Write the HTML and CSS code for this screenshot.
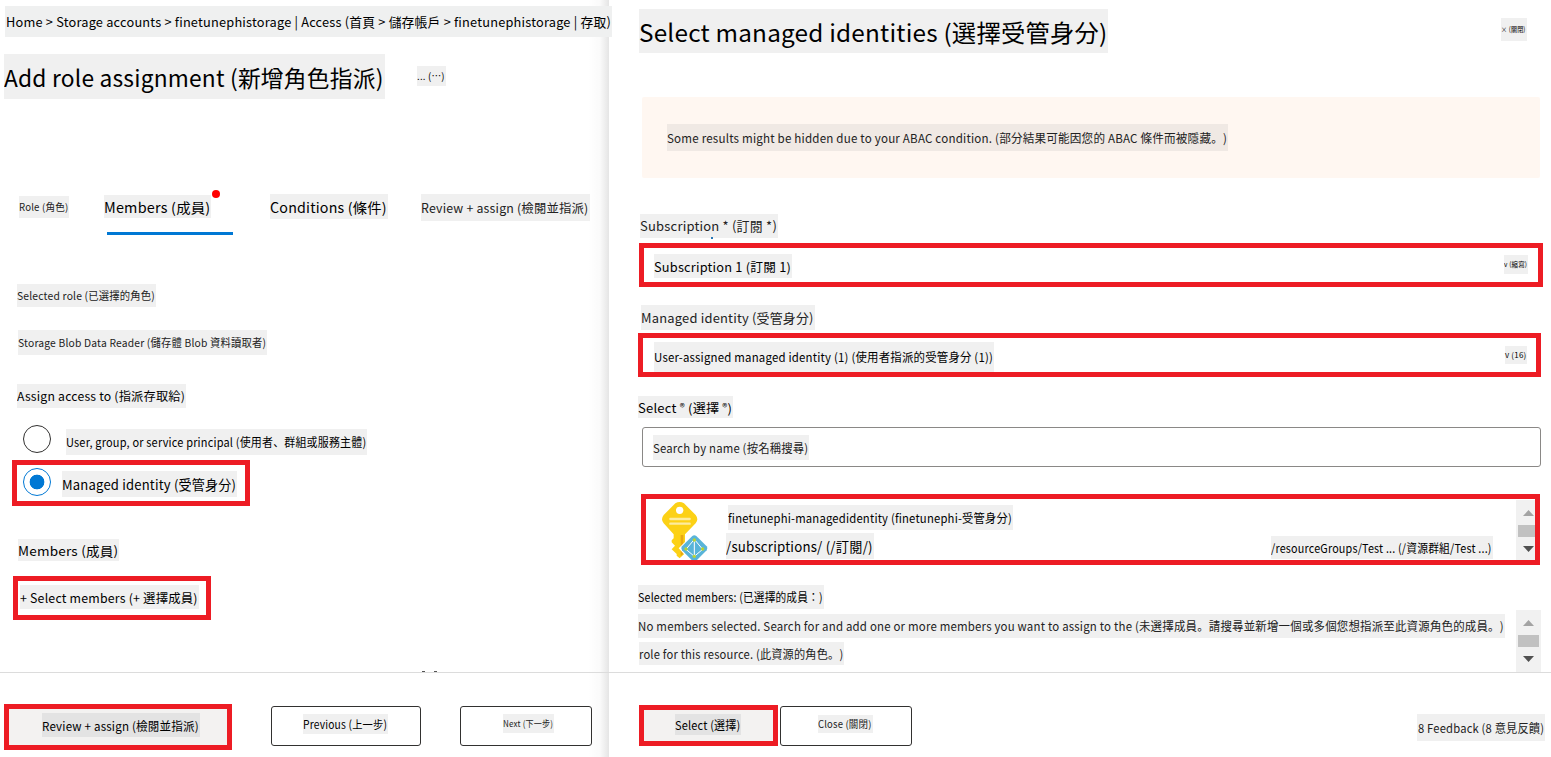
FILE: index.html
```
<!DOCTYPE html>
<html lang="ja">
<head>
<meta charset="utf-8">
<title>Add role assignment</title>
<link rel="stylesheet" href="styles.css">
</head>
<body>
<div class="app">
  <section class="panel assignment">
    <div class="content">
      <nav class="tag breadcrumb"><span>Home &gt; Storage accounts &gt; finetunephistorage | Access (首頁 &gt; 儲存帳戶 &gt; finetunephistorage | 存取)</span></nav>
      <header class="heading">
        <h1 class="tag title"><span>Add role assignment (新增角色指派)</span></h1>
        <div class="tag more"><span>... (⋯)</span></div>
      </header>
      <div class="tabs">
        <div class="tag tab-role"><span>Role (角色)</span></div>
        <div class="tab-active"><div class="tag tab-members"><span>Members (成員)</span></div><i class="dot"></i></div>
        <div class="tag tab-conditions"><span>Conditions (條件)</span></div>
        <div class="tag tab-review"><span>Review + assign (檢閱並指派)</span></div>
      </div>
      <div class="tag selected-role"><span>Selected role (已選擇的角色)</span></div>
      <div class="tag role-name"><span>Storage Blob Data Reader (儲存體 Blob 資料讀取者)</span></div>
      <div class="tag assign-to"><span>Assign access to (指派存取給)</span></div>
      <div class="option"><i class="radio"></i><div class="tag option-user"><span>User, group, or service principal (使用者、群組或服務主體)</span></div></div>
      <div class="option marked option-box"><i class="radio on"></i><div class="tag option-managed"><span>Managed identity (受管身分)</span></div></div>
      <div class="tag members-label"><span>Members (成員)</span></div>
      <div class="marked select-members"><div class="tag select-members-text"><span>+ Select members (+ 選擇成員)</span></div></div>
      <div class="remnant"><i></i><i></i></div>
    </div>
    <footer class="footer">
      <div class="button marked review-button"><div class="tag"><span>Review + assign (檢閱並指派)</span></div></div>
      <div class="button previous"><div class="tag"><span>Previous (上一步)</span></div></div>
      <div class="button next"><div class="tag"><span>Next (下一步)</span></div></div>
    </footer>
  </section>

  <section class="panel identities">
    <div class="content">
      <header class="side-heading">
        <h2 class="tag side-title"><span>Select managed identities (選擇受管身分)</span></h2>
        <div class="tag close-x"><span>× (關閉)</span></div>
      </header>
      <div class="notice"><div class="tag notice-text"><span>Some results might be hidden due to your ABAC condition. (部分結果可能因您的 ABAC 條件而被隱藏。)</span></div></div>
      <div class="tag subscription-label"><span>Subscription * (訂閱 *)</span><i class="speck"></i></div>
      <div class="field marked subscription-field"><div class="tag subscription-value"><span>Subscription 1 (訂閱 1)</span></div><div class="tag chevron-a"><span>v (縮寫)</span></div></div>
      <div class="tag identity-label"><span>Managed identity (受管身分)</span></div>
      <div class="field marked identity-field"><div class="tag identity-value"><span>User-assigned managed identity (1) (使用者指派的受管身分 (1))</span></div><div class="tag chevron-b"><span>v (16)</span></div></div>
      <div class="tag select-label"><span>Select <sup>®</sup> (選擇 <sup>®</sup>)</span></div>
      <div class="search"><div class="tag search-text"><span>Search by name (按名稱搜尋)</span></div></div>
      <div class="results marked">
        <svg class="key" viewBox="90 60 150 180">
          <path fill="#fcd116" d="M136 70Q149 62 162 70L197 105Q207 118 197 130L165 163V220L149 235L140 227V222L125 208L135 197L125 187V181L131 175V163L101 130Q91 118 101 105Z"/>
          <path fill="#e8a812" d="M152 165H160V221L152 229Z"/>
          <circle cx="149" cy="91" r="11" fill="#fff"/>
          <path stroke="#fdec9f" stroke-width="7" stroke-linecap="round" d="M121 117H179M121 131H179"/>
          <path fill="#fff" d="M193 158L240 205V240H178L146 205Z"/>
          <path fill="#59b4d9" d="M187 168Q193 163 199 168L230 199Q235 205 230 211L201 240H185L156 211Q151 205 156 199Z"/>
          <path fill="none" stroke="#fff" stroke-width="3" d="M193 178L168 208L193 229L218 208ZM193 178V229"/>
          <g fill="#b8d432"><circle cx="193" cy="180" r="5"/><circle cx="168" cy="207" r="5"/><circle cx="218" cy="207" r="5"/><circle cx="193" cy="229" r="5"/></g>
        </svg>
        <div class="result">
          <div class="tag result-name"><span>finetunephi-managedidentity (finetunephi-受管身分)</span></div>
          <div class="result-path">
            <div class="tag result-sub"><span>/subscriptions/ (/訂閱/)</span></div>
            <div class="tag result-group"><span>/resourceGroups/Test ... (/資源群組/Test ...)</span></div>
          </div>
        </div>
        <div class="scrollbar"><i class="up"></i><i class="thumb"></i><i class="down"></i></div>
      </div>
      <div class="tag selected-label"><span>Selected members: (已選擇的成員：)</span></div>
      <div class="selected">
        <div class="selected-text">
          <div class="tag none-text"><span>No members selected. Search for and add one or more members you want to assign to the (未選擇成員。請搜尋並新增一個或多個您想指派至此資源角色的成員。)</span></div>
          <div class="tag resource-text"><span>role for this resource. (此資源的角色。)</span></div>
        </div>
        <div class="scrollbar"><i class="up"></i><i class="thumb"></i><i class="down"></i></div>
      </div>
    </div>
    <footer class="footer">
      <div class="button marked select-button"><div class="tag"><span>Select (選擇)</span></div></div>
      <div class="button close-button"><div class="tag"><span>Close (關閉)</span></div></div>
      <div class="tag feedback"><span>8 Feedback (8 意見反饋)</span></div>
    </footer>
  </section>
</div>
<script src="fit.js"></script>
</body>
</html>
```
FILE: styles.css
```
* { box-sizing: border-box; }
body { margin: 0; background: #fff; color: #000; font-family: "Noto Sans CJK JP", "Noto Sans CJK TC", "Noto Sans", sans-serif; overflow: hidden; text-spacing-trim: space-all; }
h1, h2 { margin: 0; font-weight: 400; }
.app { display: flex; width: 1551px; height: 757px; }
.panel { display: flex; flex-direction: column; height: 757px; }
.assignment { width: 609px; background: linear-gradient(to right, transparent 588px, rgba(0,0,0,.02) 600px, rgba(0,0,0,.1) 609px); position: relative; z-index: 1; }
.identities { width: 942px; }
.content { height: 672px; display: flex; flex-direction: column; align-items: flex-start; }
.footer { flex: 1; border-top: 1px solid #dcdcdc; display: flex; align-items: flex-start; }

/* Labels: the text is fitted to the width of its plate */
.tag { flex: none; background: #f0f0f0; white-space: nowrap; }
.tag span { display: inline-block; transform-origin: 0 50%; letter-spacing: .2px; }
.marked { border: 5px solid #ed1c24; }

.breadcrumb { margin: 6px 0 0 5px; width: 607px; height: 31px; line-height: 32px; font-size: 13px; background: #eff0f0; padding-left: 1px; }
.heading { display: flex; margin: 17px 0 0 4px; }
.title { width: 381px; height: 45px; line-height: 46px; font-size: 23px; }
.more { margin: 12px 0 0 32px; width: 29px; height: 20px; line-height: 20px; font-size: 10px; }
.tabs { display: flex; margin: 95px 0 0 19px; height: 41px; }
.tab-role { margin-top: 2px; width: 50px; height: 22px; line-height: 22px; font-size: 10px; color: #222; }
.tab-active { margin-left: 35px; width: 129px; height: 41px; position: relative; }
.tab-active::after { content: ""; display: block; margin: 14px 0 0 3px; height: 3px; background: #0078d4; }
.tab-members { margin-top: 1px; width: 107px; height: 23px; line-height: 24px; font-size: 14px; }
.dot { position: absolute; left: 108px; top: -4px; width: 8px; height: 8px; border-radius: 50%; background: #f00; }
.tab-conditions { margin-left: 37px; width: 118px; height: 25px; line-height: 26px; font-size: 14px; }
.tab-review { margin-left: 33px; width: 169px; height: 27px; line-height: 28px; font-size: 12.5px; color: #222; }
.selected-role { margin: 49px 0 0 17px; width: 139px; height: 23px; line-height: 23px; font-size: 11px; color: #222; }
.role-name { margin: 23px 0 0 18px; width: 249px; height: 25px; line-height: 25px; font-size: 11px; color: #222; }
.assign-to { margin: 29px 0 0 17px; width: 169px; height: 24px; line-height: 24px; font-size: 12px; }
.option { display: flex; }
.option:not(.option-box) { margin: 17px 0 0 23px; }
.radio { flex: none; width: 28px; height: 28px; border: 1px solid #323130; border-radius: 50%; background: #fff; }
.radio.on { border-color: #0078d4; background: radial-gradient(circle, #0078d4 7px, #fff 7.7px); }
.option-user { margin: 4px 0 0 15px; width: 301px; height: 26px; line-height: 26px; font-size: 12px; }
.option-box { margin: 5px 0 0 12px; width: 238px; height: 46px; padding: 3px 0 0 6px; }
.option-managed { margin: 3px 0 0 11px; width: 175px; height: 26px; line-height: 26px; font-size: 13.5px; }
.members-label { margin: 33px 0 0 18px; width: 101px; height: 22px; line-height: 24px; font-size: 13px; }
.select-members { margin: 15px 0 0 13px; width: 198px; height: 44px; padding: 4px 0 0 2px; }
.select-members-text { width: 179px; height: 24px; line-height: 26px; font-size: 12.5px; }
.remnant { display: flex; gap: 9px; margin: auto 0 0 422px; }
.remnant i { width: 3px; height: 1px; background: #555; }

.button { display: flex; flex: none; height: 40px; border: 1px solid #323130; border-radius: 3px; margin-top: 33px; background: #fff; }
.button.marked { border: 5px solid #ed1c24; border-radius: 0; background: #f3f2f1; }
.button.marked .tag { background: #e3e3e3; }
.review-button { margin: 31px 0 0 4px; width: 228px; height: 46px; padding: 4px 0 0 33px; }
.review-button .tag { width: 158px; height: 24px; line-height: 25px; font-size: 12px; }
.previous { margin-left: 39px; width: 150px; padding: 7px 0 0 31px; }
.previous .tag { width: 85px; height: 20px; line-height: 20px; font-size: 11.5px; }
.next { margin-left: 39px; width: 132px; padding: 7px 0 0 42px; }
.next .tag { width: 51px; height: 19px; line-height: 19px; font-size: 9px; color: #222; }

.side-heading { display: flex; margin: 9px 0 0 30px; height: 44px; }
.side-title { width: 469px; height: 44px; line-height: 46px; font-size: 24px; }
.close-x { margin: 9px 0 0 393px; width: 26px; height: 23px; line-height: 23px; font-size: 7px; }
.notice { margin: 44px 0 0 33px; width: 898px; height: 81px; border-radius: 2px; background: #fff7f1; padding: 27px 0 0 25px; }
.notice-text { width: 561px; height: 27px; line-height: 28px; font-size: 12px; background: #f0e9e4; color: #222; }
.subscription-label { margin: 36px 0 0 31px; width: 138px; height: 24px; line-height: 24px; font-size: 13px; position: relative; color: #222; }
.speck { position: absolute; left: 71px; top: 23px; width: 2px; height: 2px; background: #2878b8; }
.field { display: flex; justify-content: space-between; height: 44px; }
.subscription-field { margin: 5px 0 0 30px; width: 904px; padding: 6px 10px 0; }
.subscription-value { width: 138px; height: 24px; line-height: 25px; font-size: 12.5px; }
.chevron-a { margin-top: 1px; width: 24px; height: 19px; line-height: 19px; font-size: 7px; }
.identity-label { margin: 18px 0 0 32px; width: 174px; height: 25px; line-height: 25px; font-size: 13px; color: #222; }
.identity-field { margin: 3px 0 0 29px; width: 903px; padding: 4px 9px 0 11px; }
.identity-value { width: 340px; height: 30px; line-height: 30px; font-size: 12px; }
.chevron-b { margin-top: 4px; width: 22px; height: 18px; line-height: 18px; font-size: 8px; }
.select-label { margin: 19px 0 0 29px; width: 95px; height: 22px; line-height: 23px; font-size: 12.5px; }
.select-label sup { font-size: 10px; line-height: 0; vertical-align: 2px; }
.search { margin: 9px 0 0 33px; width: 899px; height: 40px; border: 1px solid #8a8886; border-radius: 3px; padding: 7px 0 0 10px; }
.search-text { width: 156px; height: 25px; line-height: 25px; font-size: 12px; color: #222; }
.results { display: flex; margin: 27px 0 0 32px; width: 899px; height: 71px; overflow: hidden; }
.key { flex: none; width: 50px; height: 60px; margin: 1px 0 0 14px; }
.result { flex: none; width: 790px; margin-left: 16px; padding-top: 6px; }
.result-name { margin-left: 2px; width: 285px; height: 25px; line-height: 26px; font-size: 12px; }
.result-path { display: flex; justify-content: space-between; padding-right: 23px; margin-top: 3px; }
.result-sub { width: 148px; height: 26px; line-height: 27px; font-size: 14px; }
.result-group { margin-top: 3px; width: 222px; height: 23px; line-height: 24px; font-size: 12px; }
.scrollbar { flex: none; width: 25px; height: 62px; padding: 10px 2px 0; background: #f1f1f1; }
.results .scrollbar { margin-top: 1px; }
.scrollbar i { display: block; }
.up { width: 11px; height: 6px; margin-left: 5px; background: #a3a3a3; clip-path: polygon(50% 0, 100% 100%, 0 100%); }
.thumb { width: 21px; height: 12px; margin: 9px 0; background: #c1c1c1; }
.down { width: 11px; height: 6px; margin-left: 5px; background: #505050; clip-path: polygon(0 0, 100% 0, 50% 100%); }
.selected-label { margin: 20px 0 0 29px; width: 186px; height: 24px; line-height: 24px; font-size: 12px; }
.selected { display: flex; margin: 1px 0 0 29px; height: 62px; }
.selected-text { width: 878px; padding-top: 4px; color: #222; }
.none-text { width: 867px; height: 24px; line-height: 24px; font-size: 12px; }
.resource-text { margin: 4px 0 0 1px; width: 205px; height: 23px; line-height: 24px; font-size: 12px; }
.select-button { margin: 32px 0 0 30px; width: 139px; height: 41px; padding: 4px 0 0 31px; }
.select-button .tag { width: 66px; height: 21px; line-height: 22px; font-size: 12px; }
.close-button { margin-left: 2px; width: 132px; padding: 8px 0 0 37px; }
.close-button .tag { width: 55px; height: 18px; line-height: 18px; font-size: 10px; color: #222; }
.feedback { margin: 41px 0 0 505px; width: 128px; height: 27px; line-height: 28px; font-size: 12px; color: #222; padding-left: 1px; }
```
FILE: fit.js
```
// Scale each label horizontally so its text fills the plate.
document.querySelectorAll('.tag').forEach(function (tag) {
  var text = tag.querySelector('span');
  var left = parseFloat(getComputedStyle(tag).paddingLeft);
  var room = tag.clientWidth - left - 1;
  text.style.transform = 'scaleX(' + (room / text.offsetWidth) + ')';
});
```
